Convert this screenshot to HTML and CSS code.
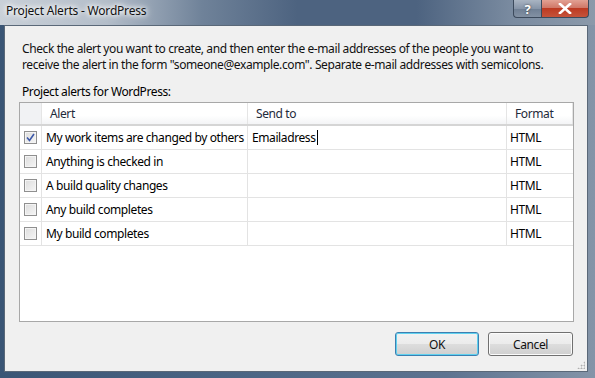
FILE: index.html
```html
<!DOCTYPE html>
<html>
<head>
<meta charset="utf-8">
<link rel="stylesheet" href="styles.css">
</head>
<body>
<div class="window">
  <div class="titlebar">
    <span class="title">Project Alerts - WordPress</span>
    <div class="caption-buttons">
      <div class="cbtn help">?</div>
      <div class="cbtn close">
        <svg width="14" height="11" viewBox="0 0 14 11"><path d="M2 1 L12 10 M12 1 L2 10" stroke="#fff" stroke-width="2.6" stroke-linecap="square"/></svg>
      </div>
    </div>
  </div>
  <div class="client">
    <p class="intro">Check the alert you want to create, and then enter the e-mail addresses of the people you want to<br>receive the alert in the form "someone@example.com". Separate e-mail addresses with semicolons.</p>
    <div class="label">Project alerts for WordPress:</div>
    <div class="grid">
      <div class="row head">
        <div class="c chk"></div>
        <div class="c alert">Alert</div>
        <div class="c send">Send to</div>
        <div class="c fmt">Format</div>
      </div>
      <div class="row">
        <div class="c chk"><span class="box checked"><svg width="9" height="9" viewBox="0 0 9 9"><path d="M1 4.5 L3.5 7.5 L8 1" fill="none" stroke="#3c58a8" stroke-width="1.6"/></svg></span></div>
        <div class="c alert">My work items are changed by others</div>
        <div class="c send edit">Emailadress<span class="caret"></span></div>
        <div class="c fmt">HTML</div>
      </div>
      <div class="row">
        <div class="c chk"><span class="box"></span></div>
        <div class="c alert">Anything is checked in</div>
        <div class="c send"></div>
        <div class="c fmt">HTML</div>
      </div>
      <div class="row">
        <div class="c chk"><span class="box"></span></div>
        <div class="c alert">A build quality changes</div>
        <div class="c send"></div>
        <div class="c fmt">HTML</div>
      </div>
      <div class="row">
        <div class="c chk"><span class="box"></span></div>
        <div class="c alert">Any build completes</div>
        <div class="c send"></div>
        <div class="c fmt">HTML</div>
      </div>
      <div class="row">
        <div class="c chk"><span class="box"></span></div>
        <div class="c alert">My build completes</div>
        <div class="c send"></div>
        <div class="c fmt">HTML</div>
      </div>
    </div>
    <div class="buttons">
      <div class="btn default">OK</div>
      <div class="btn">Cancel</div>
    </div>
    <div class="grip"></div>
  </div>
</div>
</body>
</html>
```

FILE: styles.css
```css
* { box-sizing: border-box; }
html, body { margin: 0; padding: 0; }
body {
  width: 595px; height: 378px; overflow: hidden;
  font-family: "Noto Sans", "Open Sans", sans-serif;
  font-size: 12px;
  color: #000;
  letter-spacing: -0.4px;
}
.window {
  width: 595px; height: 378px;
  display: flex; flex-direction: column;
  padding: 0 7px 6px 4px;
  background: linear-gradient(90deg, #3a5575 0%, #4b6584 40%, #5d7390 75%, #8494a8 100%);
}
.titlebar {
  height: 25px; flex: none;
  margin: 0 -7px 0 -4px;
  display: flex; align-items: flex-start; justify-content: space-between;
  background: linear-gradient(90deg, #c9d0d8 0%, #b3bdc9 18%, #6f8299 34%, #4d6380 50%, #4d6380 70%, #7a8ba0 86%, #8b99aa 100%);
}
.title {
  padding: 2px 0 0 6px;
  font-size: 12px; color: #111;
  letter-spacing: -0.2px;
  text-shadow: 0 0 6px #fff, 0 0 10px #fff, 0 0 4px #fff;
}
.caption-buttons { display: flex; margin-right: 6px; }
.cbtn {
  height: 18px; display: flex; align-items: center; justify-content: center;
  color: #fff; font-weight: bold; font-size: 13px;
  border: 1px solid #3c4a5c; border-top: none;
}
.help {
  width: 28px; border-radius: 0 0 0 4px; border-right: none;
  background: linear-gradient(#a9b4c2, #8795a8 50%, #6e7e93 51%, #8391a3);
  text-shadow: 0 0 2px #333;
}
.close {
  width: 48px; border-radius: 0 0 4px 0;
  background: linear-gradient(#e2a193, #d07868 45%, #bd3a22 50%, #c5533a 100%);
}
.client {
  flex: 1;
  position: relative;
  background: #f0f0f0;
  border: 1px solid #5a6878;
  display: flex; flex-direction: column;
  padding: 15px 13px 0 14px;
}
.intro {
  margin: 0 0 0 3px; line-height: 16px; color: #111;
}
.label { margin: 11px 0 0 3px; line-height: 16px; }
.grid {
  margin-top: 2px;
  height: 220px;
  background: #fff;
  border: 1px solid #a8a8a8;
}
.row { display: flex; height: 24px; border-bottom: 1px solid #e3e3e3; }
.row.head {
  height: 23px;
  border-bottom: 2px solid #d5d5d5;
  background: linear-gradient(#ffffff 0%, #ffffff 60%, #f3f4f6 100%);
  color: #1e2a3a;
}
.c { display: flex; align-items: center; border-right: 1px solid #e3e3e3; white-space: nowrap; }
.head .c { border-right: 1px solid #e5e5e5; }
.chk { width: 22px; justify-content: center; }
.head .chk { background: #f1f2f4; }
.alert { width: 206px; padding-left: 4px; }
.head .alert { padding-left: 8px; }
.send { width: 259px; padding-left: 4px; }
.head .send { padding-left: 8px; }
.fmt { flex: 1; padding-left: 3px; border-right: none; }
.head .fmt { padding-left: 8px; }
.box {
  width: 13px; height: 13px; display: flex; align-items: center; justify-content: center;
  border: 1px solid #8f8f8f;
  background: linear-gradient(135deg, #dcdcdc, #f6f6f6);
  box-shadow: inset 0 0 0 1px #f4f4f4;
}
.caret { display: inline-block; width: 1px; height: 15px; background: #000; margin-left: 1px; }
.buttons { display: flex; justify-content: flex-end; gap: 9px; margin-top: 10px; padding-right: 1px; }
.btn {
  width: 85px; height: 24px;
  display: flex; align-items: center; justify-content: center;
  border: 1px solid #707070; border-radius: 3px;
  background: linear-gradient(#f2f2f2 0%, #ebebeb 50%, #dddddd 51%, #cfcfcf 100%);
  box-shadow: inset 0 0 0 1px #fbfbfb;
  color: #111;
}
.btn.default {
  width: 84px;
  border-color: #3c7fb1;
  box-shadow: inset 0 0 0 1px #60d1ef;
}
.grip {
  position: absolute; right: 2px; bottom: 2px; width: 8px; height: 8px;
  background: radial-gradient(circle, #b0b0b0 0.8px, transparent 1.2px) 0 0 / 3px 3px;
  clip-path: polygon(100% 0, 100% 100%, 0 100%);
}
```
